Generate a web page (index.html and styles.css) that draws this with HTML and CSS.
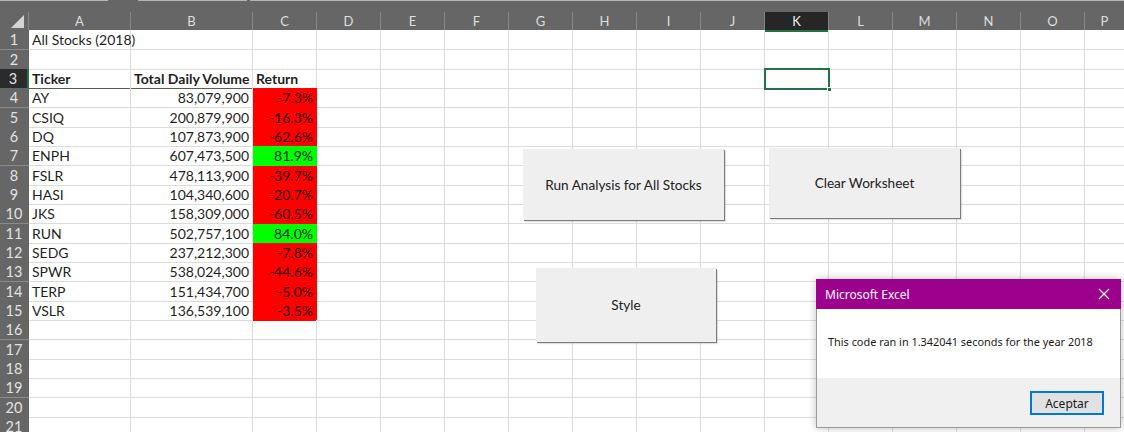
FILE: index.html
```html
<!DOCTYPE html>
<html lang="es">
<head>
<meta charset="utf-8">
<title>Excel - All Stocks</title>
<link rel="stylesheet" href="styles.css">
</head>
<body>
<div class="app">
  <div class="topstrip">
    <span class="tab tab-1"></span>
    <span class="tab tab-2"></span>
    <span class="tab tab-3"></span>
  </div>
  <div class="sheet">
    <div class="hrow">
      <div class="corner"><svg width="15" height="14" viewBox="0 0 15 14"><polygon points="14,0 14,13 1,13" fill="#d4d4d4"/></svg></div>
      <div class="ch">A</div>
      <div class="ch">B</div>
      <div class="ch">C</div>
      <div class="ch">D</div>
      <div class="ch">E</div>
      <div class="ch">F</div>
      <div class="ch">G</div>
      <div class="ch">H</div>
      <div class="ch">I</div>
      <div class="ch">J</div>
      <div class="ch ch-sel">K</div>
      <div class="ch">L</div>
      <div class="ch">M</div>
      <div class="ch">N</div>
      <div class="ch">O</div>
      <div class="ch ch-last">P</div>
    </div>

    <div class="row"><div class="rh">1</div><div class="c">All Stocks (2018)</div><div class="c"></div><div class="c"></div><div class="rest"></div></div>
    <div class="row"><div class="rh">2</div><div class="c"></div><div class="c"></div><div class="c"></div><div class="rest"></div></div>
    <div class="row"><div class="rh rh-sel">3</div><div class="c bold underline">Ticker</div><div class="c bold underline">Total Daily Volume</div><div class="c bold underline">Return</div><div class="rest"></div></div>
    <div class="row"><div class="rh">4</div><div class="c">AY</div><div class="c num">83,079,900</div><div class="c num neg">-7.3%</div><div class="rest"></div></div>
    <div class="row"><div class="rh">5</div><div class="c">CSIQ</div><div class="c num">200,879,900</div><div class="c num neg">-16.3%</div><div class="rest"></div></div>
    <div class="row"><div class="rh">6</div><div class="c">DQ</div><div class="c num">107,873,900</div><div class="c num neg">-62.6%</div><div class="rest"></div></div>
    <div class="row"><div class="rh">7</div><div class="c">ENPH</div><div class="c num">607,473,500</div><div class="c num pos">81.9%</div><div class="rest"></div></div>
    <div class="row"><div class="rh">8</div><div class="c">FSLR</div><div class="c num">478,113,900</div><div class="c num neg">-39.7%</div><div class="rest"></div></div>
    <div class="row"><div class="rh">9</div><div class="c">HASI</div><div class="c num">104,340,600</div><div class="c num neg">-20.7%</div><div class="rest"></div></div>
    <div class="row"><div class="rh">10</div><div class="c">JKS</div><div class="c num">158,309,000</div><div class="c num neg">-60.5%</div><div class="rest"></div></div>
    <div class="row"><div class="rh">11</div><div class="c">RUN</div><div class="c num">502,757,100</div><div class="c num pos">84.0%</div><div class="rest"></div></div>
    <div class="row"><div class="rh">12</div><div class="c">SEDG</div><div class="c num">237,212,300</div><div class="c num neg">-7.8%</div><div class="rest"></div></div>
    <div class="row"><div class="rh">13</div><div class="c">SPWR</div><div class="c num">538,024,300</div><div class="c num neg">-44.6%</div><div class="rest"></div></div>
    <div class="row"><div class="rh">14</div><div class="c">TERP</div><div class="c num">151,434,700</div><div class="c num neg">-5.0%</div><div class="rest"></div></div>
    <div class="row"><div class="rh">15</div><div class="c">VSLR</div><div class="c num">136,539,100</div><div class="c num neg">-3.5%</div><div class="rest"></div></div>
    <div class="row"><div class="rh">16</div><div class="c"></div><div class="c"></div><div class="c"></div><div class="rest"></div></div>
    <div class="row"><div class="rh">17</div><div class="c"></div><div class="c"></div><div class="c"></div><div class="rest"></div></div>
    <div class="row"><div class="rh">18</div><div class="c"></div><div class="c"></div><div class="c"></div><div class="rest"></div></div>
    <div class="row"><div class="rh">19</div><div class="c"></div><div class="c"></div><div class="c"></div><div class="rest"></div></div>
    <div class="row"><div class="rh">20</div><div class="c"></div><div class="c"></div><div class="c"></div><div class="rest"></div></div>
    <div class="row"><div class="rh">21</div><div class="c"></div><div class="c"></div><div class="c"></div><div class="rest"></div></div>
  </div>

  <div class="active-cell"><span class="handle"></span></div>

  <div class="shape-btn btn-run">Run Analysis for All Stocks</div>
  <div class="shape-btn btn-clear">Clear Worksheet</div>
  <div class="shape-btn btn-style">Style</div>

  <div class="dialog">
    <div class="dlg-title">
      <span class="dlg-title-text">Microsoft Excel</span>
      <svg class="dlg-close" width="12" height="12" viewBox="0 0 12 12"><path d="M1 1 L11 11 M11 1 L1 11" stroke="#fff" stroke-width="1.2" fill="none"/></svg>
    </div>
    <div class="dlg-body">This code ran in 1.342041 seconds for the year 2018</div>
    <div class="dlg-foot"><div class="dlg-btn">Aceptar</div></div>
  </div>
</div>
</body>
</html>
```

FILE: styles.css
```css
* { box-sizing: border-box; }
html, body { margin: 0; padding: 0; }
body {
  width: 1124px;
  height: 432px;
  overflow: hidden;
  background: #ffffff;
  font-family: "Lato", "Noto Sans", sans-serif;
}
.app {
  position: relative;
  width: 1124px;
  height: 432px;
  overflow: hidden;
}

/* top strip */
.topstrip {
  height: 12px;
  background: #666666;
  display: flex;
  align-items: flex-start;
}
.tab { display: block; height: 1px; background: #b4b4b4; }
.tab-1 { width: 108px; }
.tab-2 { width: 109px; margin-left: 30px; }
.tab-3 { flex: 1; margin-left: 3px; }

/* grid */
.hrow {
  display: grid;
  grid-template-columns: 29px 102px 122px repeat(13, 64px) 1fr;
  height: 18.3px;
  background: #666666;
}
.corner {
  display: flex;
  align-items: flex-end;
  justify-content: flex-end;
  padding: 0 3px 3px 0;
  border-right: 1px solid #868686;
}
.ch {
  color: #dedede;
  font-size: 13px;
  line-height: 18px;
  text-align: center;
  border-right: 1px solid #868686;
}
.ch-sel {
  background: #262626;
  border-bottom: 2px solid #217346;
  color: #f0f0f0;
}
.ch-last { border-right: 0; }

.row {
  display: grid;
  grid-template-columns: 29px 102px 122px 64px 1fr;
  height: 19.35px;
}
.rh {
  background: #666666;
  color: #e2e2e2;
  font-size: 14.5px;
  line-height: 19px;
  text-align: center;
  border-bottom: 1px solid #8a8a8a;
  padding-right: 1px;
}
.rh-sel {
  background: #2b2b2b;
  border-right: 2px solid #217346;
}
.c {
  font-size: 14px;
  color: #1f1f1f;
  line-height: 19px;
  padding: 0 2px 0 3px;
  white-space: nowrap;
  border-right: 1px solid #dcdcdc;
  border-bottom: 1px solid #dcdcdc;
}
.bold { font-weight: 700; }
.underline { border-bottom-color: #5a5a5a; }
.num { text-align: right; padding-right: 3px; }
.neg { background: #ff0000; border-color: #ff0000; color: #2a0000; }
.pos { background: #00ff00; border-color: #00ff00; color: #002a00; }
.rest {
  border-bottom: 1px solid #dcdcdc;
  background: repeating-linear-gradient(90deg, transparent 0 63px, #dcdcdc 63px 64px);
}

/* active cell K3 */
.active-cell {
  position: absolute;
  left: 764px;
  top: 68px;
  width: 66px;
  height: 22px;
  border: 2px solid #217346;
}
.handle {
  position: absolute;
  right: -4px;
  bottom: -4px;
  width: 5px;
  height: 5px;
  background: #217346;
  border: 1px solid #ffffff;
}

/* form buttons */
.shape-btn {
  position: absolute;
  display: flex;
  align-items: center;
  justify-content: center;
  background: #efefef;
  color: #222222;
  font-size: 13.6px;
  box-shadow: 1px 1px 0 #7c7c7c, 2px 2px 1px rgba(0,0,0,0.12);
}
.btn-run { left: 523px; top: 149px; width: 201px; height: 71px; }
.btn-clear { left: 769px; top: 148px; width: 191px; height: 70px; }
.btn-style { left: 536px; top: 268px; width: 180px; height: 74px; }

/* dialog */
.dialog {
  position: absolute;
  left: 816px;
  top: 279px;
  width: 305px;
  height: 149px;
  background: #ffffff;
  border: 1px solid #9a9a9a;
  border-top: 0;
  box-shadow: 0 0 8px rgba(0,0,0,0.25);
  display: flex;
  flex-direction: column;
  font-family: "Noto Sans", "Open Sans", sans-serif;
}
.dlg-title {
  height: 30px;
  background: #9e008e;
  color: #ffffff;
  display: flex;
  align-items: center;
  justify-content: space-between;
  padding: 0 11px 0 9px;
  margin: 0 -1px;
}
.dlg-title-text { font-size: 12px; }
.dlg-body {
  height: 69px;
  font-size: 10.9px;
  color: #1a1a1a;
  padding: 25px 0 0 11px;
  white-space: nowrap;
}
.dlg-foot {
  flex: 1;
  background: #f0f0f0;
  display: flex;
  justify-content: flex-end;
  align-items: center;
  padding-right: 16px;
}
.dlg-btn {
  width: 74px;
  height: 24px;
  border: 2px solid #0078d7;
  background: #e1e1e1;
  font-size: 12px;
  color: #1a1a1a;
  display: flex;
  align-items: center;
  justify-content: center;
  margin-top: 1px;
}
```
